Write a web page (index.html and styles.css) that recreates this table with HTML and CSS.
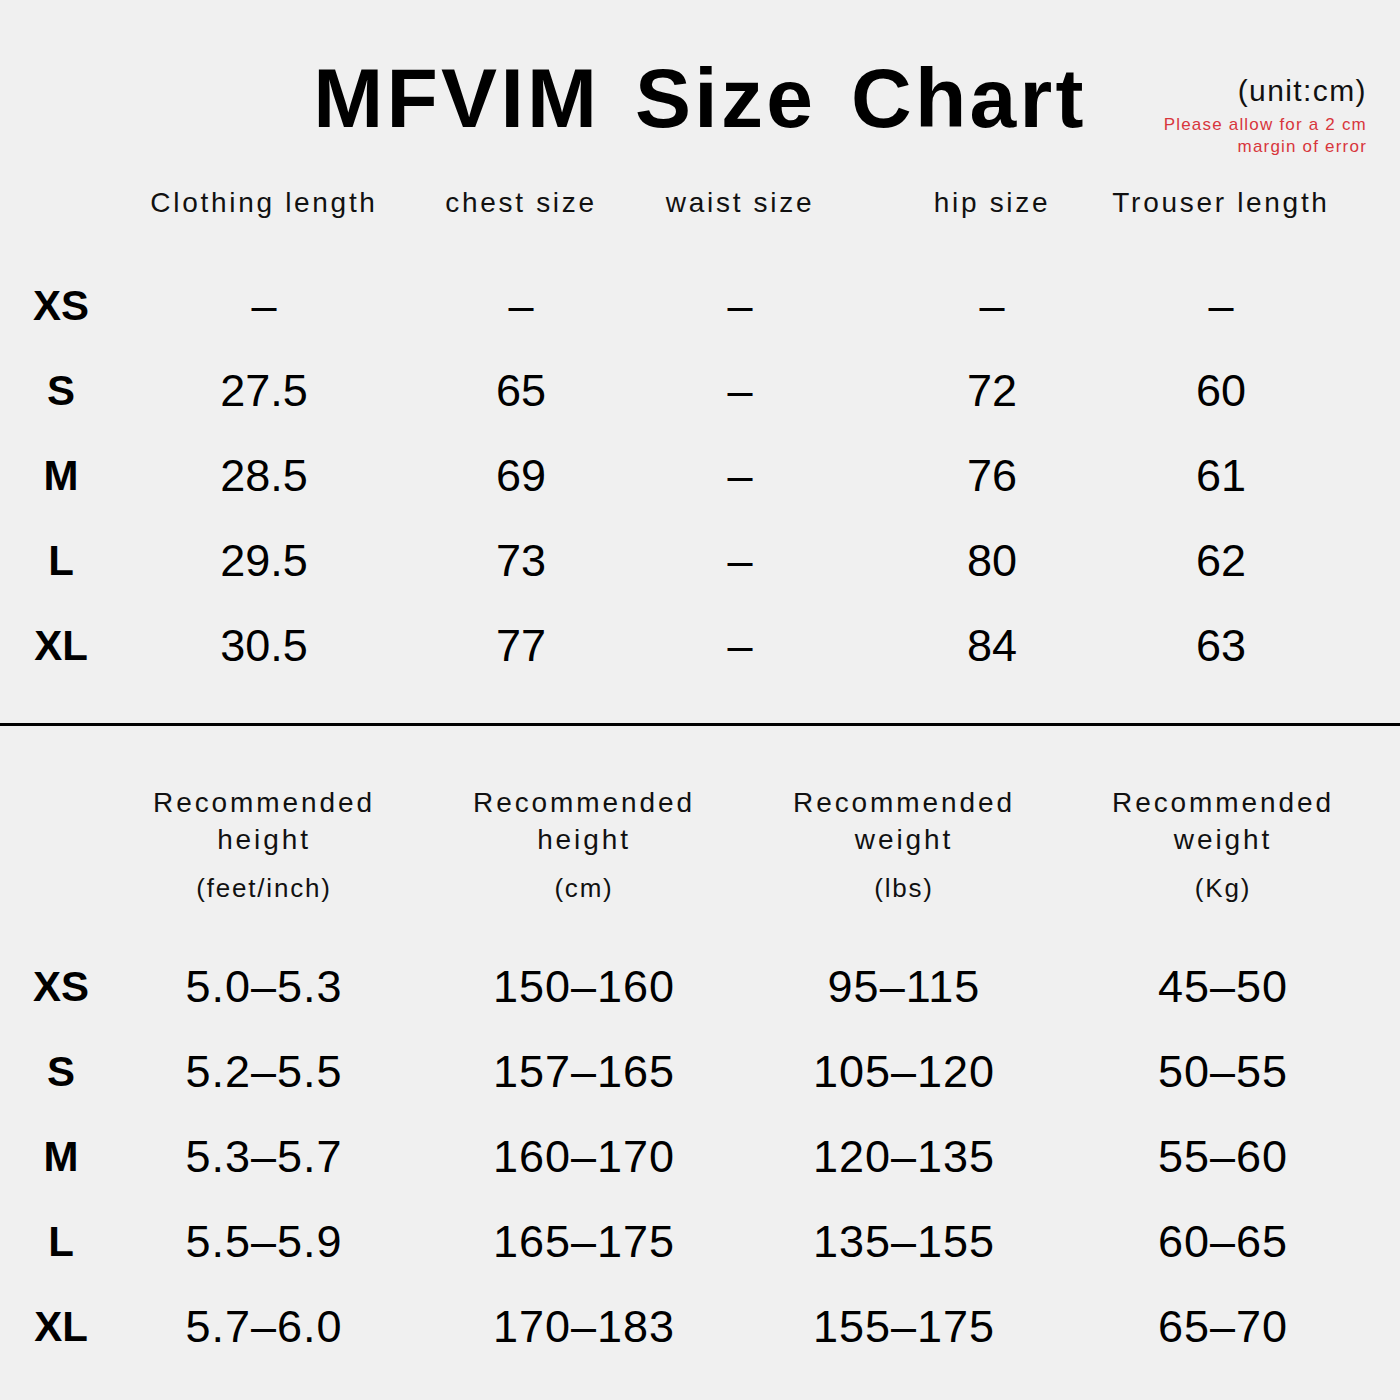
FILE: index.html
```html
<!DOCTYPE html>
<html lang="en">
<head>
<meta charset="utf-8">
<title>MFVIM Size Chart</title>
<link rel="stylesheet" href="styles.css">
</head>
<body>
<div class="page">
  <header class="top">
    <div class="spacer"></div>
    <h1 class="title">MFVIM Size Chart</h1>
    <div class="unit">
      <div class="unit-main">(unit:cm)</div>
      <div class="unit-note">Please allow for a 2 cm<br>margin of error</div>
    </div>
  </header>

  <section class="t1">
    <div class="grid1 head1">
      <div class="hcell"></div>
      <div class="hcell">Clothing length</div>
      <div class="hcell">chest size</div>
      <div class="hcell">waist size</div>
      <div class="hcell">hip size</div>
      <div class="hcell">Trouser length</div>
    </div>
    <div class="grid1 body1">
      <div class="size">XS</div><div class="val">–</div><div class="val">–</div><div class="val">–</div><div class="val">–</div><div class="val">–</div>
      <div class="size">S</div><div class="val">27.5</div><div class="val">65</div><div class="val">–</div><div class="val">72</div><div class="val">60</div>
      <div class="size">M</div><div class="val">28.5</div><div class="val">69</div><div class="val">–</div><div class="val">76</div><div class="val">61</div>
      <div class="size">L</div><div class="val">29.5</div><div class="val">73</div><div class="val">–</div><div class="val">80</div><div class="val">62</div>
      <div class="size">XL</div><div class="val">30.5</div><div class="val">77</div><div class="val">–</div><div class="val">84</div><div class="val">63</div>
    </div>
  </section>

  <hr class="divider">

  <section class="t2">
    <div class="grid2 head2">
      <div class="hcell2"></div>
      <div class="hcell2"><span>Recommended</span><span>height</span><span class="u">(feet/inch)</span></div>
      <div class="hcell2"><span>Recommended</span><span>height</span><span class="u">(cm)</span></div>
      <div class="hcell2"><span>Recommended</span><span>weight</span><span class="u">(lbs)</span></div>
      <div class="hcell2"><span>Recommended</span><span>weight</span><span class="u">(Kg)</span></div>
    </div>
    <div class="grid2 body2">
      <div class="size">XS</div><div class="val2">5.0–5.3</div><div class="val2">150–160</div><div class="val2">95–115</div><div class="val2">45–50</div>
      <div class="size">S</div><div class="val2">5.2–5.5</div><div class="val2">157–165</div><div class="val2">105–120</div><div class="val2">50–55</div>
      <div class="size">M</div><div class="val2">5.3–5.7</div><div class="val2">160–170</div><div class="val2">120–135</div><div class="val2">55–60</div>
      <div class="size">L</div><div class="val2">5.5–5.9</div><div class="val2">165–175</div><div class="val2">135–155</div><div class="val2">60–65</div>
      <div class="size">XL</div><div class="val2">5.7–6.0</div><div class="val2">170–183</div><div class="val2">155–175</div><div class="val2">65–70</div>
    </div>
  </section>
</div>
</body>
</html>
```

FILE: styles.css
```css
* { box-sizing: border-box; }
html, body {
  margin: 0;
  padding: 0;
  background: #f0f0f0;
}
body {
  font-family: "Liberation Sans", Arial, sans-serif;
  color: #000;
}
.page {
  width: 1400px;
  height: 1400px;
  overflow: hidden;
}

/* header */
.top {
  display: grid;
  grid-template-columns: 1fr auto 1fr;
  height: 160px;
}
.title {
  margin: 56px 0 0 0;
  font-size: 84px;
  line-height: 84px;
  font-weight: 700;
  letter-spacing: 3.3px;
  word-spacing: 8px;
  white-space: nowrap;
}
.unit {
  text-align: right;
  padding-right: 33px;
  padding-top: 73px;
}
.unit-main {
  font-size: 30px;
  line-height: 36px;
  letter-spacing: 1.4px;
  color: #111;
}
.unit-note {
  margin-top: 5px;
  font-size: 17px;
  line-height: 22px;
  letter-spacing: 1.2px;
  color: #d8363c;
}

/* shared grid layout */
.grid1, .grid2 {
  display: grid;
  justify-items: center;
  align-items: center;
}
.grid1 {
  grid-template-columns: 122px 284px 230px 208px 296px 162px;
}
.grid2 {
  grid-template-columns: 122px 284px 356px 284px 354px;
}

/* top table */
.head1 {
  height: 86px;
}
.hcell {
  font-size: 28px;
  letter-spacing: 2.7px;
  color: #111;
  white-space: nowrap;
}
.body1 {
  margin-top: 17px;
  grid-auto-rows: 85px;
}
.size {
  font-size: 42px;
  font-weight: 700;
  line-height: 1;
}
.val {
  font-size: 45px;
  line-height: 1;
}

.divider {
  margin: 35px 0 0 0;
  border: 0;
  height: 3px;
  background: #000;
}

/* bottom table */
.t2 {
  margin-top: 58px;
}
.head2 {
  align-items: start;
}
.hcell2 {
  display: flex;
  flex-direction: column;
  align-items: center;
  font-size: 28px;
  line-height: 37px;
  letter-spacing: 2.9px;
  color: #111;
  white-space: nowrap;
}
.hcell2 .u {
  margin-top: 12px;
  font-size: 26px;
  letter-spacing: 1.8px;
}
.body2 {
  margin-top: 37px;
  grid-auto-rows: 85px;
}
.val2 {
  font-size: 45px;
  line-height: 1;
  letter-spacing: 1px;
}
```
